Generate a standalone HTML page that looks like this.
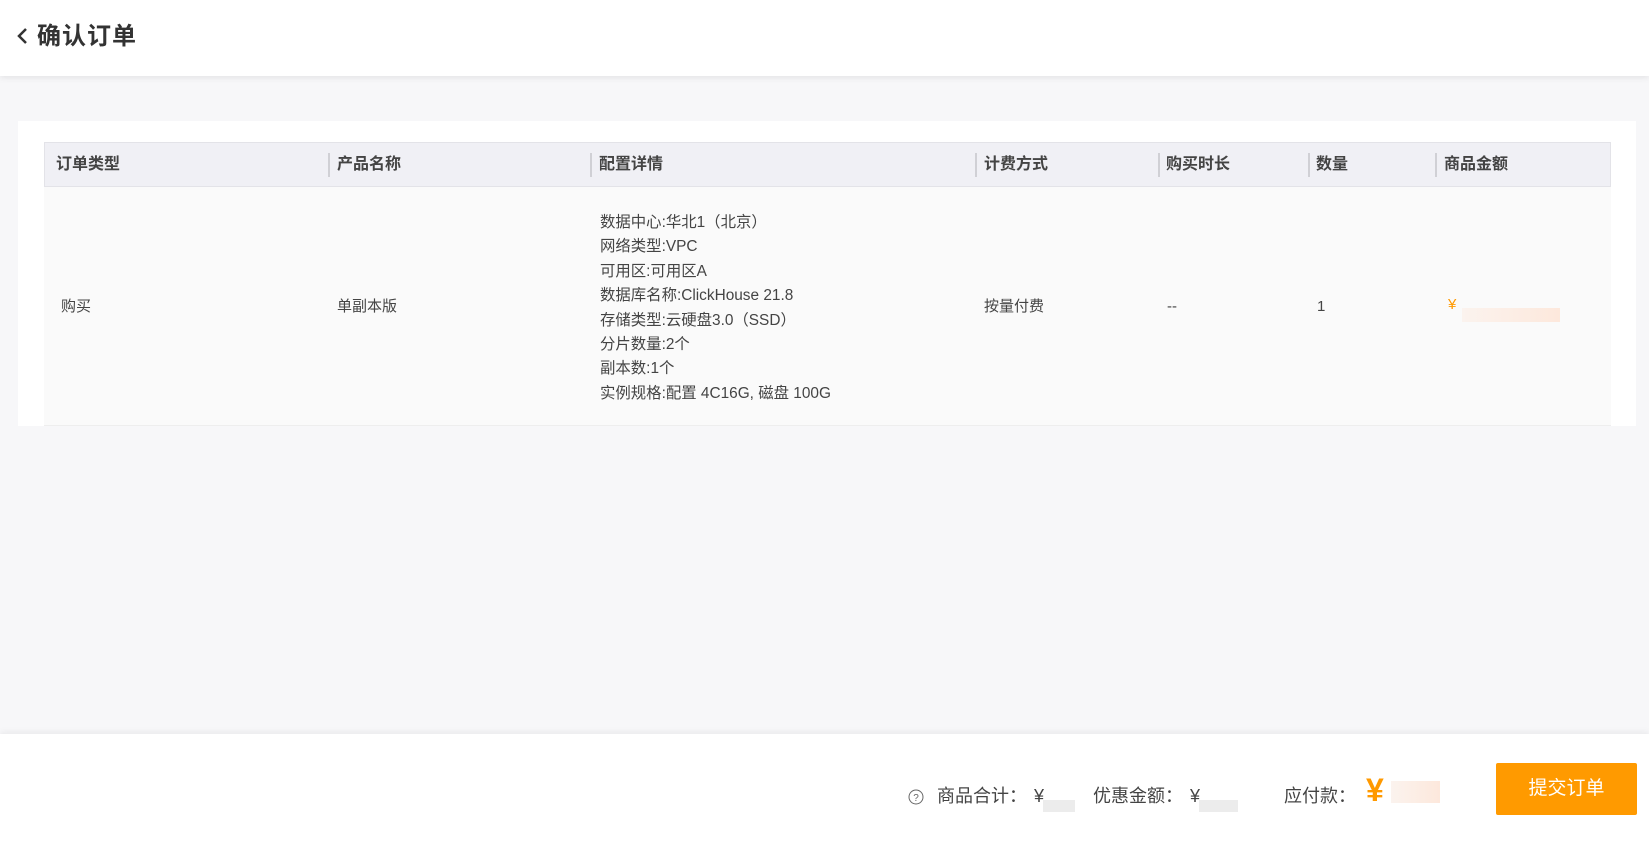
<!DOCTYPE html>
<html><head><meta charset="utf-8"><style>
*{margin:0;padding:0;box-sizing:border-box}
body{width:1649px;height:842px;background:#f7f7f9;font-family:"Liberation Sans","Noto Sans CJK SC",sans-serif;color:#333;position:relative;overflow:hidden}
.hd{position:absolute;left:0;top:0;width:1649px;height:76px;background:#fff;box-shadow:0 2px 6px rgba(0,0,0,.08)}
.hd .t{position:absolute;left:16px;top:22px;font-size:24px;font-weight:bold;color:#333;line-height:30px;letter-spacing:1px}
.card{position:absolute;left:18px;top:121px;width:1618px;height:305px;background:#fff}
.th{position:absolute;left:44px;top:142px;width:1567px;height:45px;background:#f0f0f5;border:1px solid #e3e3e8}
.th span{position:absolute;top:0;line-height:43px;font-size:16px;font-weight:bold;color:#444}
.th i{position:absolute;top:10px;width:2px;height:24px;background:#d0d0d5}
.row{position:absolute;left:44px;top:187px;width:1567px;height:239px;background:#fafafa;border-bottom:1px solid #eee}
.c{position:absolute;top:297px;font-size:15px;color:#444;line-height:20px}
.cfg{position:absolute;left:600px;top:211px;font-size:15.4px;color:#444;line-height:24.4px}
.blur{position:absolute;background:linear-gradient(90deg,#fbf3ee,#fde8dc)}
.ft{position:absolute;left:0;top:734px;width:1649px;height:108px;background:#fff;box-shadow:0 -2px 6px rgba(0,0,0,.06)}
.f{position:absolute;font-size:18px;color:#444;line-height:24px;top:784px}
.btn{position:absolute;left:1496px;top:763px;width:141px;height:52px;background:#ff9a00;color:#fff;font-size:19px;text-align:center;line-height:52px;border-radius:2px}
</style></head><body>
<div class="hd"><div class="t"><svg width="14" height="18" viewBox="0 0 14 18" style="vertical-align:-1px;margin-right:7px"><path d="M10 2 L3 9 L10 16" fill="none" stroke="#333" stroke-width="2.5"/></svg>确认订单</div></div>
<div class="card"></div>
<div class="th">
<span style="left:11px">订单类型</span>
<i style="left:283px"></i><span style="left:292px">产品名称</span>
<i style="left:545px"></i><span style="left:554px">配置详情</span>
<i style="left:930px"></i><span style="left:939px">计费方式</span>
<i style="left:1113px"></i><span style="left:1121px">购买时长</span>
<i style="left:1263px"></i><span style="left:1271px">数量</span>
<i style="left:1390px"></i><span style="left:1399px">商品金额</span>
</div>
<div class="row"></div>
<div class="c" style="left:61px">购买</div>
<div class="c" style="left:337px">单副本版</div>
<div class="cfg">数据中心:华北1（北京）<br>网络类型:VPC<br>可用区:可用区A<br>数据库名称:ClickHouse 21.8<br>存储类型:云硬盘3.0（SSD）<br>分片数量:2个<br>副本数:1个<br>实例规格:配置 4C16G, 磁盘 100G</div>
<div class="c" style="left:984px">按量付费</div>
<div class="c" style="left:1167px">--</div>
<div class="c" style="left:1317px">1</div>
<div class="c" style="left:1448px;color:#f90;top:295px;font-size:15px">¥</div>
<div class="blur" style="left:1462px;top:308px;width:98px;height:14px"></div>
<div class="ft"></div>
<svg style="position:absolute;left:908px;top:789px" width="16" height="16" viewBox="0 0 16 16"><circle cx="8" cy="8" r="7" fill="none" stroke="#666" stroke-width="1"/><text x="8" y="12" font-size="10" text-anchor="middle" fill="#666" font-family="Liberation Sans">?</text></svg>
<div class="f" style="left:937px">商品合计：</div>
<div class="f" style="left:1034px">¥</div>
<div class="blur" style="left:1043px;top:800px;width:32px;height:12px;background:#ececec"></div>
<div class="f" style="left:1093px">优惠金额：</div>
<div class="f" style="left:1190px">¥</div>
<div class="blur" style="left:1199px;top:800px;width:39px;height:12px;background:#ececec"></div>
<div class="f" style="left:1284px">应付款：</div>
<div class="f" style="left:1366px;top:772px;font-size:32px;line-height:36px;color:#f90;font-weight:bold">¥</div>
<div class="blur" style="left:1391px;top:781px;width:49px;height:22px"></div>
<div class="btn">提交订单</div>
</body></html>
